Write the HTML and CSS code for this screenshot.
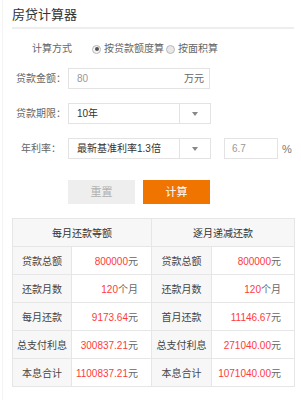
FILE: index.html
```html
<!DOCTYPE html>
<html lang="zh">
<head>
<meta charset="utf-8">
<title>房贷计算器</title>
<link rel="stylesheet" href="styles.css">
</head>
<body>
<div class="page">
  <h1 class="title">房贷计算器</h1>
  <div class="row method">
    <span class="method-label">计算方式</span>
    <span class="radio checked"></span><span class="opt">按贷款额度算</span>
    <span class="radio second"></span><span class="opt">按面积算</span>
  </div>
  <div class="row field first">
    <span class="label">贷款金额：</span>
    <div class="input amount"><span class="ph">80</span><span class="unit">万元</span></div>
  </div>
  <div class="row field">
    <span class="label">贷款期限：</span>
    <div class="select"><span class="sel-text">10年</span><span class="sel-arrow"><i class="tri"></i></span></div>
  </div>
  <div class="row field">
    <span class="label">年利率：</span>
    <div class="select"><span class="sel-text">最新基准利率1.3倍</span><span class="sel-arrow"><i class="tri"></i></span></div>
    <div class="input rate"><span class="ph">6.7</span></div>
    <span class="pct">%</span>
  </div>
  <div class="row buttons">
    <span class="btn reset">重置</span>
    <span class="btn calc">计算</span>
  </div>
  <table class="result">
    <colgroup><col class="c1"><col class="c2"><col class="c3"><col class="c4"></colgroup>
    <tr class="head"><th colspan="2">每月还款等额</th><th colspan="2">逐月递减还款</th></tr>
    <tr><td class="k">贷款总额</td><td class="v"><em>800000</em>元</td><td class="k">贷款总额</td><td class="v"><em>800000</em>元</td></tr>
    <tr><td class="k">还款月数</td><td class="v"><em>120</em>个月</td><td class="k">还款月数</td><td class="v"><em>120</em>个月</td></tr>
    <tr><td class="k">每月还款</td><td class="v"><em>9173.64</em>元</td><td class="k">首月还款</td><td class="v"><em>11146.67</em>元</td></tr>
    <tr><td class="k">总支付利息</td><td class="v"><em>300837.21</em>元</td><td class="k">总支付利息</td><td class="v"><em>271040.00</em>元</td></tr>
    <tr><td class="k">本息合计</td><td class="v"><em>1100837.21</em>元</td><td class="k">本息合计</td><td class="v"><em>1071040.00</em>元</td></tr>
  </table>
</div>
</body>
</html>
```

FILE: styles.css
```css
html, body {
  margin: 0;
  padding: 0;
  background: #fff;
}
body {
  font-family: "Liberation Sans", "Noto Sans CJK SC", sans-serif;
  font-size: 10px;
  color: #666;
}
.page {
  margin-left: 2px;
  border-left: 1px solid #f4f4f4;
  padding-left: 9px;
  min-height: 400px;
  box-sizing: border-box;
}
.title {
  margin: 0;
  width: 282px;
  padding: 7px 0 4px 0;
  font-size: 13px;
  line-height: 16px;
  font-weight: normal;
  color: #333;
  border-bottom: 2px solid #eeeeee;
}
.row {
  display: flex;
  align-items: center;
}
.method {
  margin-top: 10px;
  height: 20px;
  line-height: 20px;
  padding-left: 20px;
  color: #666;
}
.method-label {
  margin-right: 20px;
}
.radio {
  width: 9px;
  height: 9px;
  box-sizing: border-box;
  border: 1px solid #b8b8b8;
  border-radius: 50%;
  background: #e8e8e8;
  margin-right: 3px;
  display: flex;
  align-items: center;
  justify-content: center;
}
.radio.second {
  margin-left: 2px;
}
.radio.checked {
  background: #f4f4f4;
}
.radio.checked::after {
  content: "";
  width: 4px;
  height: 4px;
  border-radius: 50%;
  background: #555;
}
.opt {
  color: #666;
}
.field {
  margin-top: 14px;
  height: 21px;
}
.field.first {
  margin-top: 9px;
}
.label {
  width: 56px;
  padding-left: 2px;
  box-sizing: border-box;
  text-align: center;
  line-height: 21px;
  color: #666;
}
.input, .select {
  height: 21px;
  box-sizing: border-box;
  border: 1px solid #e3e3e3;
  display: flex;
  align-items: center;
  line-height: 19px;
}
.input.amount {
  width: 142px;
  justify-content: space-between;
  padding: 0 5px 0 8px;
}
.ph {
  color: #999;
}
.unit {
  color: #666;
}
.select {
  width: 143px;
}
.sel-text {
  width: 110px;
  box-sizing: border-box;
  padding-left: 8px;
  color: #333;
  white-space: nowrap;
  overflow: hidden;
}
.sel-arrow {
  width: 31px;
  height: 19px;
  box-sizing: border-box;
  border-left: 1px solid #e3e3e3;
  display: flex;
  align-items: center;
  justify-content: center;
}
.tri {
  width: 0;
  height: 0;
  border-left: 3.5px solid transparent;
  border-right: 3.5px solid transparent;
  border-top: 4px solid #888;
}
.input.rate {
  width: 54px;
  margin-left: 13px;
  padding-left: 7px;
}
.pct {
  margin-left: 4px;
  color: #777;
  font-size: 11px;
}
.buttons {
  margin-top: 21px;
  padding-left: 56px;
  gap: 8px;
}
.btn {
  width: 67px;
  height: 24px;
  line-height: 24px;
  text-align: center;
  font-size: 11px;
}
.btn.reset {
  background: #eeeeee;
  color: #b0b0b0;
}
.btn.calc {
  background: #f07400;
  color: #fff;
}
.result {
  margin-top: 14px;
  width: 282px;
  border-collapse: collapse;
  table-layout: fixed;
  font-size: 10px;
}
.c1 { width: 59px; }
.c2 { width: 80px; }
.c3 { width: 60px; }
.c4 { width: 83px; }
.result th, .result td {
  border: 1px solid #e6e6e6;
  height: 27px;
  padding: 0;
  white-space: nowrap;
}
.result th {
  background: #f7f7f7;
  font-weight: normal;
  color: #333;
  text-align: center;
}
.result td.k {
  background: #f7f7f7;
  color: #444;
  text-align: center;
}
.result td.v {
  text-align: right;
  padding-right: 13px;
  color: #666;
}
.result em {
  font-style: normal;
  color: #ff3a3a;
}
```
